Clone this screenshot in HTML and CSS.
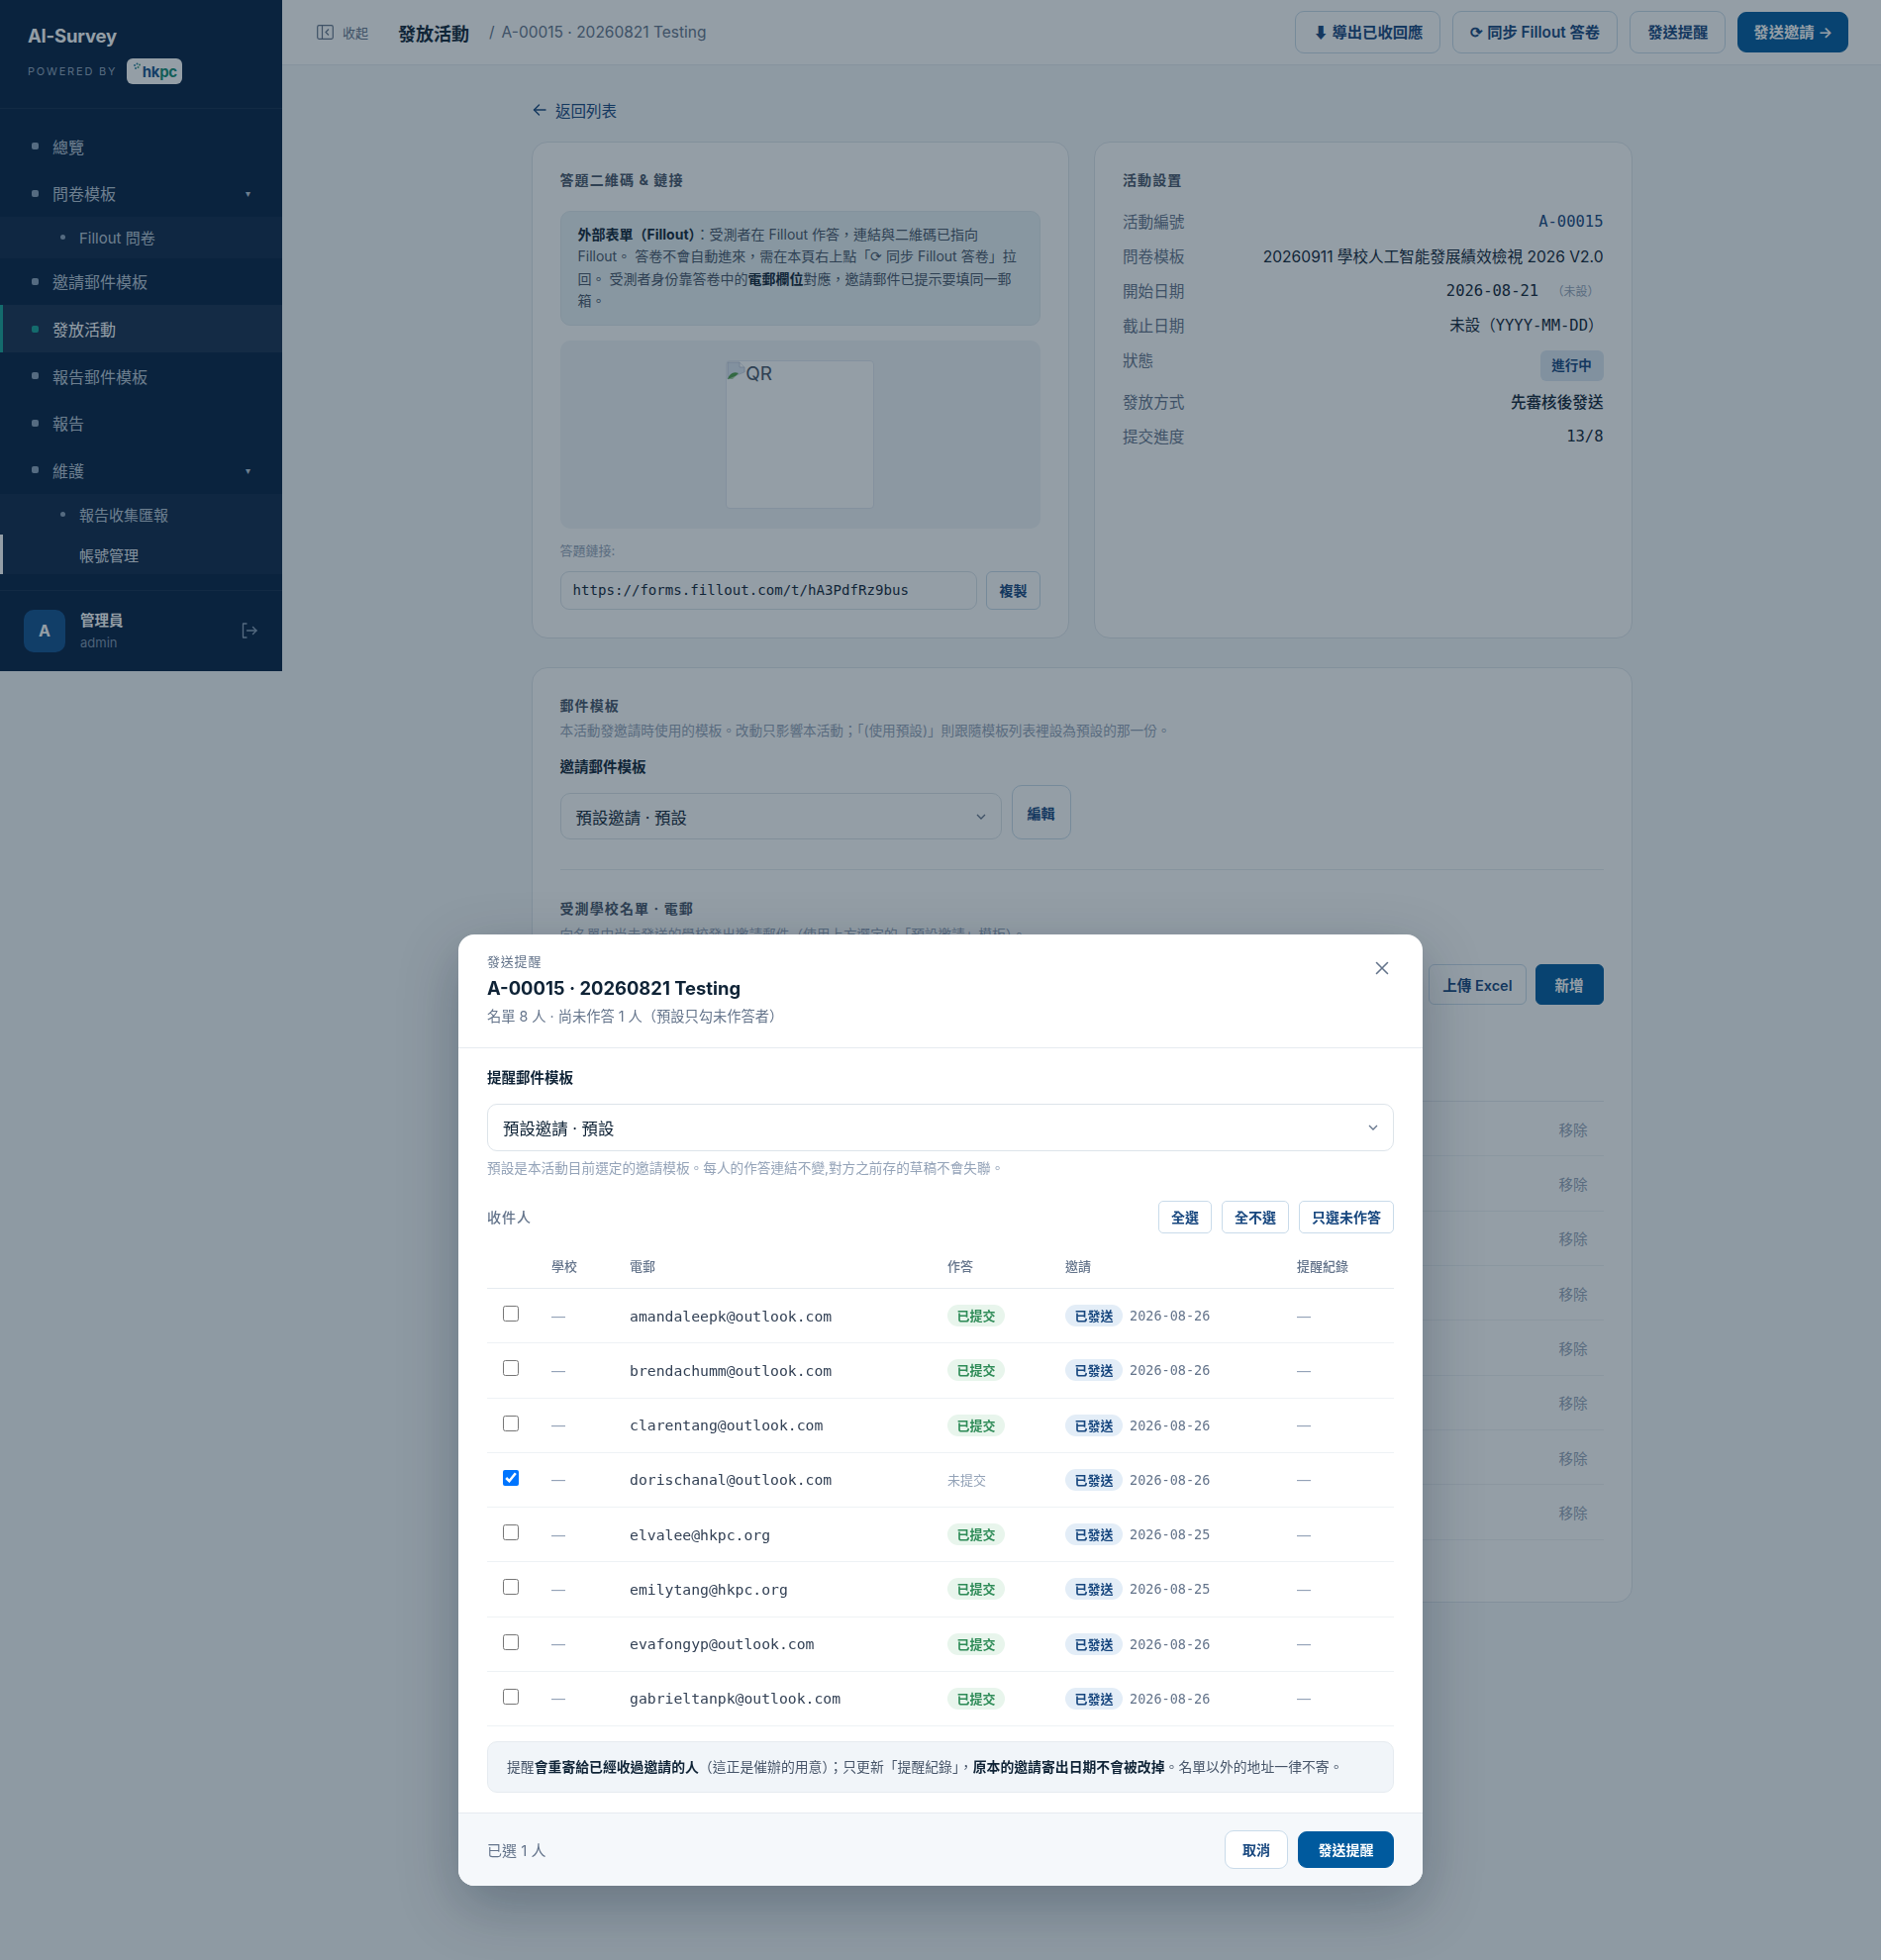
FILE: index.html
```html
<!DOCTYPE html>
<html lang="zh-Hant">
<head>
    <meta charset="UTF-8">
    <meta name="viewport" content="width=device-width, initial-scale=1.0">
    <title>發放活動 - AI-Survey</title>
    <link rel="stylesheet" href="styles.css">
</head>
<body>

<div class="app">
    <aside class="sidebar">
        <div class="brand">
            <div class="brand-name">AI-Survey</div>
            <div class="brand-sub">
                <span class="powered">POWERED BY</span>
                <span class="logo">
                    <svg class="logo-leaf" width="9" height="10" viewBox="0 0 9 10"><circle cx="2" cy="3" r="1" fill="#2b7f9e"/><circle cx="4.5" cy="1.6" r="1" fill="#2b7f9e"/><circle cx="7" cy="2.6" r="1" fill="#3c9a78"/><circle cx="3" cy="6" r="1" fill="#2b7f9e"/><circle cx="5.5" cy="5" r="1" fill="#3c9a78"/></svg><span class="logo-hk">hk</span><span class="logo-pc">pc</span>
                </span>
            </div>
        </div>
        <nav class="nav">
            <a class="nav-item"><i class="dot"></i>總覽</a>
            <a class="nav-item"><i class="dot"></i>問卷模板<b class="caret">▾</b></a>
            <div class="subnav">
                <a class="sub-item"><i class="sub-dot"></i>Fillout 問卷</a>
            </div>
            <a class="nav-item"><i class="dot"></i>邀請郵件模板</a>
            <a class="nav-item active"><i class="dot"></i>發放活動</a>
            <a class="nav-item"><i class="dot"></i>報告郵件模板</a>
            <a class="nav-item"><i class="dot"></i>報告</a>
            <a class="nav-item"><i class="dot"></i>維護<b class="caret">▾</b></a>
            <div class="subnav">
                <a class="sub-item"><i class="sub-dot"></i>報告收集匯報</a>
                <a class="sub-item focus">帳號管理</a>
            </div>
        </nav>
        <div class="user">
            <div class="avatar">A</div>
            <div class="user-info">
                <div class="user-name">管理員</div>
                <div class="user-id">admin</div>
            </div>
            <svg class="logout" width="18" height="18" viewBox="0 0 18 18" fill="none" stroke="currentColor" stroke-width="1.3" stroke-linecap="round" stroke-linejoin="round"><path d="M6 2H2.5v14H6"/><path d="M6.5 9H16"/><path d="M12.5 5.5 16 9l-3.500 3.500"/></svg>
        </div>
    </aside>

    <main class="main">
        <header class="topbar">
            <div class="collapse">
                <svg width="17" height="17" viewBox="0 0 17 17" fill="none" stroke="currentColor" stroke-width="1.2"><rect x="0.700" y="1.700" width="15.600" height="13.600" rx="1.500"/><path d="M5.500 2v13"/><path d="M12 5.500 9 8.500l3 3"/></svg>
                <span>收起</span>
            </div>
            <h1 class="page-title">發放活動</h1>
            <span class="crumb"><span class="crumb-sep">/</span>A-00015 · 20260821 Testing</span>
            <div class="top-actions">
                <button class="btn btn-top">⬇ 導出已收回應</button>
                <button class="btn btn-top">⟳ 同步 Fillout 答卷</button>
                <button class="btn btn-top">發送提醒</button>
                <button class="btn btn-top btn-primary">發送邀請 →</button>
            </div>
        </header>

        <div class="content">
            <a class="back">
                <svg width="14" height="14" viewBox="0 0 14 14" fill="none" stroke="currentColor" stroke-width="1.400" stroke-linecap="round" stroke-linejoin="round"><path d="M13 7H1.500"/><path d="M6.500 2 1.500 7l5 5"/></svg>
                返回列表
            </a>

            <div class="two-col">
                <section class="card">
                    <h2 class="card-title">答題二維碼 &amp; 鏈接</h2>
                    <div class="info-box">
                        <strong>外部表單（Fillout）</strong>：受測者在 Fillout 作答，連結與二維碼已指向 Fillout。 答卷不會自動進來，需在本頁右上點「⟳ 同步 Fillout 答卷」拉回。 受測者身份靠答卷中的<strong>電郵欄位</strong>對應，邀請郵件已提示要填同一郵箱。
                    </div>
                    <div class="qr-box">
                        <div class="qr">
                            <svg width="19" height="19" viewBox="0 0 19 19"><path d="M1 1h12l5 5v5L1 18z" fill="#dfe7f3" stroke="#b9c4d4" stroke-width="0.800"/><path d="M13 1v5h5" fill="#fff" stroke="#b9c4d4" stroke-width="0.800"/><path d="M1 18c2-6 6-8 11-6l-6 6z" fill="#4f9e4a"/><path d="M1 18l17-7v7z" fill="#fff" opacity="0.500"/></svg><span>QR</span>
                        </div>
                    </div>
                    <div class="link-label">答題鏈接:</div>
                    <div class="link-row">
                        <div class="link-input">https://forms.fillout.com/t/hA3PdfRz9bus</div>
                        <button class="btn btn-copy">複製</button>
                    </div>
                </section>

                <section class="card">
                    <h2 class="card-title settings-title">活動設置</h2>
                    <div class="kv"><span class="k">活動編號</span><span class="v mono code">A-00015</span></div>
                    <div class="kv"><span class="k">問卷模板</span><span class="v">20260911 學校人工智能發展績效檢視 2026 V2.0</span></div>
                    <div class="kv"><span class="k">開始日期</span><span class="v mono">2026-08-21 <small class="unset">（未設）</small></span></div>
                    <div class="kv"><span class="k">截止日期</span><span class="v mono">未設（YYYY-MM-DD）</span></div>
                    <div class="kv kv-status"><span class="k">狀態</span><span class="pill-status">進行中</span></div>
                    <div class="kv"><span class="k">發放方式</span><span class="v strong">先審核後發送</span></div>
                    <div class="kv"><span class="k">提交進度</span><span class="v mono">13/8</span></div>
                </section>
            </div>

            <section class="card card-wide">
                <h2 class="card-title">郵件模板</h2>
                <p class="card-desc">本活動發邀請時使用的模板。改動只影響本活動；「(使用預設)」則跟隨模板列表裡設為預設的那一份。</p>
                <div class="field-label">邀請郵件模板</div>
                <div class="template-row">
                    <div class="select select-page">
                        <span>預設邀請 · 預設</span>
                        <svg width="10" height="6" viewBox="0 0 10 6" fill="none" stroke="currentColor" stroke-width="1.300"><path d="M1 1l4 4 4-4"/></svg>
                    </div>
                    <button class="btn btn-edit">編輯</button>
                </div>
                <hr class="divider">
                <h2 class="card-title">受測學校名單 · 電郵</h2>
                <p class="card-desc desc-tight">向名單中尚未發送的學校發出邀請郵件（使用上方選定的「預設邀請」模板）。</p>
                <div class="school-tools">
                    <button class="btn btn-tool">上傳 Excel</button>
                    <button class="btn btn-tool btn-primary">新增</button>
                </div>
                <div class="school-list">
                    <div class="school-row"><span>amandaleepk@outlook.com</span><a>移除</a></div>
                    <div class="school-row"><span>brendachumm@outlook.com</span><a>移除</a></div>
                    <div class="school-row"><span>clarentang@outlook.com</span><a>移除</a></div>
                    <div class="school-row"><span>dorischanal@outlook.com</span><a>移除</a></div>
                    <div class="school-row"><span>elvalee@hkpc.org</span><a>移除</a></div>
                    <div class="school-row"><span>emilytang@hkpc.org</span><a>移除</a></div>
                    <div class="school-row"><span>evafongyp@outlook.com</span><a>移除</a></div>
                    <div class="school-row"><span>gabrieltanpk@outlook.com</span><a>移除</a></div>
                </div>
            </section>
        </div>
    </main>
</div>

<div class="overlay">
    <div class="modal">
        <div class="modal-head">
            <div>
                <div class="modal-kicker">發送提醒</div>
                <div class="modal-title">A-00015 · 20260821 Testing</div>
                <div class="modal-sub">名單 8 人 · 尚未作答 1 人（預設只勾未作答者）</div>
            </div>
            <svg class="modal-close" width="14" height="14" viewBox="0 0 14 14" fill="none" stroke="currentColor" stroke-width="1.600" stroke-linecap="round"><path d="M1.500 1.500l11 11M12.500 1.500l-11 11"/></svg>
        </div>
        <div class="modal-body">
            <div class="field-label modal-label">提醒郵件模板</div>
            <div class="select select-modal">
                <span>預設邀請 · 預設</span>
                <svg width="10" height="6" viewBox="0 0 10 6" fill="none" stroke="currentColor" stroke-width="1.300"><path d="M1 1l4 4 4-4"/></svg>
            </div>
            <p class="hint">預設是本活動目前選定的邀請模板。每人的作答連結不變,對方之前存的草稿不會失聯。</p>
            <div class="recipients-bar">
                <span class="recipients-label">收件人</span>
                <div class="recipient-btns">
                    <button class="btn btn-small">全選</button>
                    <button class="btn btn-small">全不選</button>
                    <button class="btn btn-small">只選未作答</button>
                </div>
            </div>
            <table class="recipients">
                <colgroup>
                    <col class="c-check"><col class="c-school"><col class="c-email"><col class="c-status"><col class="c-invite"><col class="c-log">
                </colgroup>
                <thead>
                    <tr><th></th><th>學校</th><th>電郵</th><th>作答</th><th>邀請</th><th>提醒紀錄</th></tr>
                </thead>
                <tbody>
                    <tr>
                        <td class="check"><input type="checkbox"></td><td class="none">—</td><td class="email">amandaleepk@outlook.com</td>
                        <td><span class="badge badge-green">已提交</span></td>
                        <td><span class="badge badge-blue">已發送</span><span class="date">2026-08-26</span></td><td class="none">—</td>
                    </tr>
                    <tr>
                        <td class="check"><input type="checkbox"></td><td class="none">—</td><td class="email">brendachumm@outlook.com</td>
                        <td><span class="badge badge-green">已提交</span></td>
                        <td><span class="badge badge-blue">已發送</span><span class="date">2026-08-26</span></td><td class="none">—</td>
                    </tr>
                    <tr>
                        <td class="check"><input type="checkbox"></td><td class="none">—</td><td class="email">clarentang@outlook.com</td>
                        <td><span class="badge badge-green">已提交</span></td>
                        <td><span class="badge badge-blue">已發送</span><span class="date">2026-08-26</span></td><td class="none">—</td>
                    </tr>
                    <tr>
                        <td class="check"><input type="checkbox" checked></td><td class="none">—</td><td class="email">dorischanal@outlook.com</td>
                        <td><span class="not-sent">未提交</span></td>
                        <td><span class="badge badge-blue">已發送</span><span class="date">2026-08-26</span></td><td class="none">—</td>
                    </tr>
                    <tr>
                        <td class="check"><input type="checkbox"></td><td class="none">—</td><td class="email">elvalee@hkpc.org</td>
                        <td><span class="badge badge-green">已提交</span></td>
                        <td><span class="badge badge-blue">已發送</span><span class="date">2026-08-25</span></td><td class="none">—</td>
                    </tr>
                    <tr>
                        <td class="check"><input type="checkbox"></td><td class="none">—</td><td class="email">emilytang@hkpc.org</td>
                        <td><span class="badge badge-green">已提交</span></td>
                        <td><span class="badge badge-blue">已發送</span><span class="date">2026-08-25</span></td><td class="none">—</td>
                    </tr>
                    <tr>
                        <td class="check"><input type="checkbox"></td><td class="none">—</td><td class="email">evafongyp@outlook.com</td>
                        <td><span class="badge badge-green">已提交</span></td>
                        <td><span class="badge badge-blue">已發送</span><span class="date">2026-08-26</span></td><td class="none">—</td>
                    </tr>
                    <tr>
                        <td class="check"><input type="checkbox"></td><td class="none">—</td><td class="email">gabrieltanpk@outlook.com</td>
                        <td><span class="badge badge-green">已提交</span></td>
                        <td><span class="badge badge-blue">已發送</span><span class="date">2026-08-26</span></td><td class="none">—</td>
                    </tr>
                </tbody>
            </table>
            <div class="modal-note">提醒<strong>會重寄給已經收過邀請的人</strong>（這正是催辦的用意）；只更新「提醒紀錄」，<strong>原本的邀請寄出日期不會被改掉</strong>。名單以外的地址一律不寄。</div>
        </div>
        <div class="modal-foot">
            <span class="selected-count">已選 1 人</span>
            <div class="foot-btns">
                <button class="btn btn-cancel">取消</button>
                <button class="btn btn-send">發送提醒</button>
            </div>
        </div>
    </div>
</div>

</body>
</html>
```

FILE: styles.css
```css
* {
    box-sizing: border-box;
}

body {
    margin: 0;
    min-height: 1980px;
    background-color: #f5f8fa;
    color: #0f2336;
    font-family: Inter, "Noto Sans CJK TC", "Noto Sans", sans-serif;
    font-size: 14px;
}

h1, h2, p {
    margin: 0;
}

button {
    font-family: inherit;
}

.mono,
.email,
.date,
.link-input {
    font-family: "DejaVu Sans Mono", "Noto Sans CJK TC", monospace;
}

.app {
    display: flex;
    align-items: flex-start;
}

/* sidebar */
.sidebar {
    flex: 0 0 285px;
    width: 285px;
    background-color: #051f42;
    color: #b9c6d6;
}

.brand {
    height: 110px;
    padding: 24px 28px 0;
    border-bottom: 1px solid rgba(255, 255, 255, 0.06);
}

.brand-name {
    color: #fff;
    font-size: 18.500px;
    font-weight: 700;
    line-height: 24px;
    letter-spacing: -0.2px;
}

.brand-sub {
    display: flex;
    align-items: center;
    gap: 10px;
    margin-top: 11px;
}

.powered {
    color: #8fa3bb;
    font-size: 11px;
    letter-spacing: 1.800px;
}

.logo {
    display: flex;
    align-items: center;
    justify-content: center;
    width: 56px;
    height: 26px;
    background-color: #fff;
    border-radius: 6px;
    font-size: 15px;
    font-weight: 700;
    letter-spacing: -0.3px;
}

.logo-leaf {
    margin: -8px 1px 0 0;
}

.logo-hk {
    color: #14518c;
}

.logo-pc {
    color: #118a72;
}

.nav {
    padding: 14px 0 15.800px;
    border-bottom: 1px solid rgba(255, 255, 255, 0.06);
}

.nav-item {
    display: flex;
    align-items: center;
    height: 47.600px;
    padding-left: 32px;
    font-size: 16px;
}

.nav-item.active {
    background-color: rgba(255, 255, 255, 0.07);
    border-left: 3px solid #17a398;
    padding-left: 29px;
    color: #fff;
}

.dot {
    width: 7px;
    height: 7px;
    margin-right: 14px;
    background-color: #8da3bc;
    border-radius: 2px;
}

.active .dot {
    background-color: #17a398;
}

.caret {
    margin-left: auto;
    margin-right: 32px;
    font-size: 10px;
    font-weight: 400;
}

.subnav {
    background-color: rgba(255, 255, 255, 0.04);
}

.sub-item {
    display: flex;
    align-items: center;
    height: 41.500px;
    padding-left: 80px;
    font-size: 15px;
    position: relative;
}

.subnav .sub-item + .sub-item {
    height: 40px;
}

.sub-dot {
    position: absolute;
    left: 61px;
    top: 18px;
    width: 5px;
    height: 5px;
    background-color: #8da3bc;
    border-radius: 50%;
}

.sub-item.focus {
    border-left: 3px solid #fff;
    padding-left: 77px;
    color: #e4eaf1;
}

.user {
    display: flex;
    align-items: center;
    height: 81px;
    padding: 0 24px;
}

.avatar {
    display: flex;
    align-items: center;
    justify-content: center;
    width: 42px;
    height: 43px;
    margin-right: 15px;
    background-color: #12508f;
    border-radius: 10px;
    color: #fff;
    font-size: 16px;
    font-weight: 700;
}

.user-name {
    color: #fff;
    font-size: 14.500px;
    font-weight: 700;
    line-height: 20px;
}

.user-id {
    margin-top: 3px;
    color: #7e93ac;
    font-size: 13px;
    line-height: 18px;
}

.logout {
    margin-left: auto;
    margin-right: 0;
    color: #8da3bc;
}

/* top bar */
.main {
    flex: 1;
    min-width: 0;
}

.topbar {
    display: flex;
    align-items: center;
    height: 66px;
    padding: 0 33px 0 35px;
    background-color: #fff;
    border-bottom: 1px solid #e6ebf0;
}

.collapse {
    display: flex;
    align-items: center;
    gap: 9px;
    color: #64748b;
    font-size: 13px;
}

.page-title {
    margin-left: 30px;
    font-size: 18px;
    font-weight: 700;
    color: #0f2336;
}

.crumb {
    margin-left: 20px;
    color: #64748b;
    font-size: 15.500px;
}

.crumb-sep {
    margin-right: 7px;
}

.top-actions {
    display: flex;
    align-items: center;
    gap: 12px;
    margin-left: auto;
}

.btn {
    background-color: #fff;
    border: 1.500px solid #c9dbea;
    color: #16467e;
    font-weight: 600;
    cursor: pointer;
}

.btn-top {
    height: 43px;
    padding: 0 17px 3px;
    border-radius: 9px;
    font-size: 15.300px;
}

.btn-top.btn-primary {
    height: 41px;
    padding: 0 15px 3px;
}

.btn-primary,
.btn-send {
    background-color: #005a9e;
    border-color: #005a9e;
    color: #fff;
}

/* page content */
.content {
    width: 1112px;
    margin: 0 auto;
    padding-top: 34px;
}

.back {
    display: flex;
    align-items: center;
    gap: 9px;
    height: 22px;
    margin-bottom: 21px;
    padding-left: 1.500px;
    color: #16467e;
    font-size: 15.500px;
}

.two-col {
    display: grid;
    grid-template-columns: 543.500px 543.500px;
    gap: 25px;
}

.card {
    padding: 27px 28px 28px;
    background-color: #fff;
    border: 1px solid #dfe6ec;
    border-radius: 16px;
}

.card-title {
    margin-bottom: 20px;
    color: #475569;
    font-size: 14px;
    font-weight: 700;
    line-height: 22px;
    letter-spacing: 1.100px;
}

.settings-title {
    margin-bottom: 14px;
}

.info-box {
    padding: 12px 17px;
    background-color: #eaf3f6;
    border: 1px solid #e0eaef;
    border-radius: 10px;
    color: #475569;
    font-size: 14px;
    line-height: 22.400px;
}

.info-box strong {
    color: #0f2336;
}

.qr-box {
    display: flex;
    justify-content: center;
    margin-top: 15px;
    padding: 20px;
    background-color: #f0f5f8;
    border-radius: 10px;
}

.qr {
    display: flex;
    align-items: flex-start;
    width: 150px;
    height: 150px;
    background-color: #fff;
    border: 1px solid #e2e8f0;
    border-radius: 4px;
    color: #475569;
    font-size: 19px;
    line-height: 26px;
}

.link-label {
    margin-top: 11px;
    color: #94a3b8;
    font-size: 13px;
    line-height: 22px;
}

.link-row {
    display: flex;
    gap: 9px;
    margin-top: 10px;
}

.link-input {
    flex: 1;
    height: 39px;
    padding-left: 12px;
    background-color: #fff;
    border: 1px solid #dbe3ea;
    border-radius: 9px;
    color: #0f2336;
    font-size: 14.100px;
    line-height: 37px;
}

.btn-copy {
    width: 55px;
    height: 39px;
    border-radius: 6px;
    font-size: 14px;
}

.kv {
    display: flex;
    justify-content: space-between;
    padding: 7px 0;
    font-size: 15.600px;
    line-height: 21px;
}

.kv-status {
    padding-bottom: 4px;
}

.k {
    color: #64748b;
}

.v {
    color: #0f2336;
}

.v.mono {
    font-size: 15.500px;
}

.v.strong {
    font-weight: 500;
}

.v.code {
    color: #16467e;
}

.unset {
    margin-left: 4px;
    margin-right: 4px;
    color: #94a3b8;
    font-family: Inter, "Noto Sans CJK TC", sans-serif;
    font-size: 12px;
}

.pill-status {
    width: 64px;
    height: 31px;
    background-color: #dce8f3;
    border-radius: 6px;
    color: #16467e;
    font-size: 13.500px;
    font-weight: 700;
    line-height: 31px;
    text-align: center;
}

.card-wide {
    height: 945px;
    margin-top: 29.500px;
}

.card-desc {
    margin: -20px 0 0;
    padding-top: 4px;
    color: #94a3b8;
    font-size: 13.650px;
    line-height: 21px;
}

.field-label {
    margin-top: 14.500px;
    color: #0f2336;
    font-size: 14.500px;
    font-weight: 600;
    line-height: 21px;
}

.template-row {
    display: flex;
    align-items: flex-end;
    gap: 10px;
    margin-top: 8.500px;
}

.select {
    display: flex;
    align-items: center;
    justify-content: space-between;
    height: 48px;
    padding: 0 15px;
    background-color: #fff;
    border: 1px solid #dde4ea;
    border-radius: 10px;
    color: #0f2336;
    font-size: 16.400px;
}

.select svg {
    color: #64748b;
}

.select-page {
    width: 446px;
    height: 47px;
}

.btn-edit {
    width: 60px;
    height: 55px;
    border-radius: 10px;
    font-size: 14px;
}

.divider {
    height: 1px;
    margin: 30px 0 28px;
    background-color: #e6ebf0;
    border: 0;
}

.desc-tight {
    margin-top: -19.500px;
}

.school-tools {
    display: flex;
    justify-content: flex-end;
    gap: 9px;
    margin-top: 19.500px;
}

.btn-tool {
    height: 41px;
    padding: 0 13px;
    border-radius: 6px;
    font-size: 14.500px;
}

.btn-tool.btn-primary {
    width: 69px;
}

.school-list {
    margin-top: 97px;
    border-top: 1px solid #e6ebf0;
}

.school-row {
    display: flex;
    align-items: center;
    justify-content: space-between;
    height: 55.300px;
    padding: 0 16px;
    border-bottom: 1px solid #eef2f5;
    color: #475569;
}

.school-row a {
    color: #94a3b8;
    font-size: 14.500px;
}

/* modal */
.overlay {
    position: fixed;
    inset: 0;
    display: flex;
    align-items: flex-end;
    justify-content: center;
    padding-bottom: 75px;
    background-color: rgba(18, 40, 58, 0.45);
}

.modal {
    width: 974px;
    background-color: #fff;
    border-radius: 16px;
    box-shadow: 0 20px 60px rgba(10, 25, 45, 0.3);
    overflow: hidden;
}

.modal-head {
    display: flex;
    justify-content: space-between;
    height: 115px;
    padding: 18px 34px 0 29px;
    border-bottom: 1px solid #e6ebf0;
}

.modal-kicker {
    color: #64748b;
    font-size: 13px;
    line-height: 18px;
    letter-spacing: 0.800px;
}

.modal-title {
    margin-top: 5px;
    color: #0f2336;
    font-size: 18.400px;
    font-weight: 700;
    line-height: 27px;
}

.modal-sub {
    margin-top: 4px;
    color: #64748b;
    font-size: 14.250px;
    line-height: 21px;
}

.modal-close {
    margin: 9px 0 0;
    color: #64748b;
}

.modal-body {
    padding: 18px 29px 20px;
}

.modal-label {
    margin-top: 0;
    line-height: 24px;
}

.select-modal {
    margin-top: 14px;
}

.hint {
    margin-top: 7px;
    color: #94a3b8;
    font-size: 13.650px;
    line-height: 20px;
}

.recipients-bar {
    display: flex;
    align-items: center;
    justify-content: space-between;
    margin-top: 23px;
}

.recipients-label {
    color: #64748b;
    font-size: 14px;
    font-weight: 500;
    letter-spacing: 1px;
}

.recipient-btns {
    display: flex;
    gap: 10px;
}

.btn-small {
    height: 33px;
    padding: 0 12px;
    border-radius: 5px;
    font-size: 14px;
}

.recipients {
    width: 100%;
    margin-top: 18px;
    border-collapse: collapse;
    table-layout: fixed;
}

.c-check { width: 65px; }
.c-school { width: 79px; }
.c-email { width: 321px; }
.c-status { width: 119px; }
.c-invite { width: 234px; }

.recipients th {
    height: 38px;
    padding: 0 0 8px;
    border-bottom: 1px solid #e6ebf0;
    color: #64748b;
    font-size: 13px;
    font-weight: 500;
    text-align: left;
}

.recipients td {
    height: 55.250px;
    padding: 0;
    border-bottom: 1px solid #eef2f5;
    font-size: 14px;
}

.check {
    padding-left: 16px !important;
}

.check input {
    display: block;
    width: 16px;
    height: 16px;
    margin: -4px 0 0;
}

.none {
    color: #94a3b8;
}

.email {
    color: #334155;
    font-size: 14.750px !important;
}

.badge {
    display: inline-block;
    width: 58px;
    height: 22px;
    border-radius: 11px;
    font-size: 13px;
    font-weight: 600;
    line-height: 22px;
    text-align: center;
}

.badge-green {
    background-color: #e8f5ec;
    color: #2e8b57;
}

.badge-blue {
    background-color: #e3edf7;
    color: #16467e;
}

.not-sent {
    color: #94a3b8;
    font-size: 13px;
}

.date {
    margin-left: 7px;
    color: #64748b;
    font-size: 13.500px;
}

.modal-note {
    margin-top: 15px;
    padding: 15px 19px;
    background-color: #f1f5f9;
    border: 1px solid #e6ebf0;
    border-radius: 10px;
    color: #475569;
    font-size: 13.850px;
    line-height: 20px;
}

.modal-note strong {
    color: #0f2336;
}

.modal-foot {
    display: flex;
    align-items: center;
    justify-content: space-between;
    height: 74px;
    padding: 0 29px 1px;
    background-color: #f5f8fb;
    border-top: 1px solid #e6ebf0;
}

.selected-count {
    color: #64748b;
    font-size: 15px;
}

.foot-btns {
    display: flex;
    align-items: center;
    gap: 10px;
}

.btn-cancel {
    width: 64px;
    height: 39px;
    border-radius: 9px;
    font-size: 14px;
}

.btn-send {
    width: 97px;
    height: 37px;
    border-radius: 9px;
    font-size: 14px;
}
```
